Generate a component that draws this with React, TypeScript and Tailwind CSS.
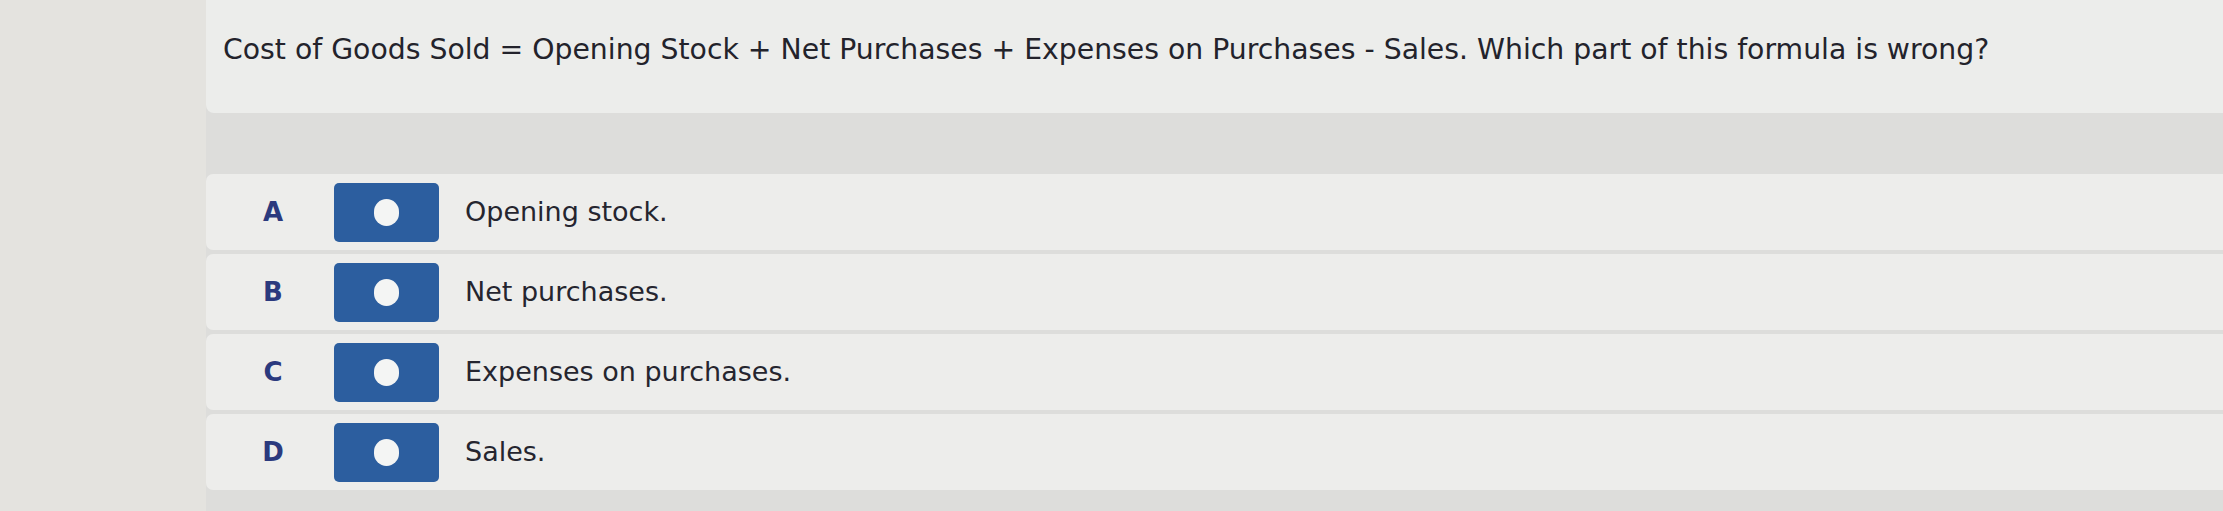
import React from "react";

const options = [
  { letter: "A", text: "Opening stock." },
  { letter: "B", text: "Net purchases." },
  { letter: "C", text: "Expenses on purchases." },
  { letter: "D", text: "Sales." },
];

export default function App() {
  return (
    <div
      className="w-[2223px] h-[511px] overflow-hidden bg-[#e4e3df] pl-[206px] flex"
      style={{ fontFamily: '"DejaVu Sans", Verdana, sans-serif' }}
    >
      <div className="flex-1 bg-[#dddddb] flex flex-col">
        <div className="h-[113px] bg-[#ecedeb] rounded-bl-[8px] pl-[17px] pt-[32px]">
          <p className="text-[28.3px] leading-[36px] text-[#23232b]">
            Cost of Goods Sold = Opening Stock + Net Purchases + Expenses on Purchases - Sales. Which part of this formula is wrong?
          </p>
        </div>
        <div className="mt-[61px] flex flex-col gap-[4px]">
          {options.map((o) => (
            <div
              key={o.letter}
              className="h-[76px] bg-[#ededeb] rounded-l-[7px] flex items-center"
            >
              <div className="ml-[46px] w-[42px] text-center text-[26px] font-bold text-[#2b3a7e]">
                {o.letter}
              </div>
              <div className="ml-[40px] w-[105px] h-[59px] rounded-[5px] bg-[#2c5e9f] flex items-center justify-center">
                <div className="w-[25px] h-[27px] rounded-full bg-[#f4f5f4]" />
              </div>
              <div className="ml-[26px] text-[27px] text-[#25252f]">{o.text}</div>
            </div>
          ))}
        </div>
      </div>
    </div>
  );
}
